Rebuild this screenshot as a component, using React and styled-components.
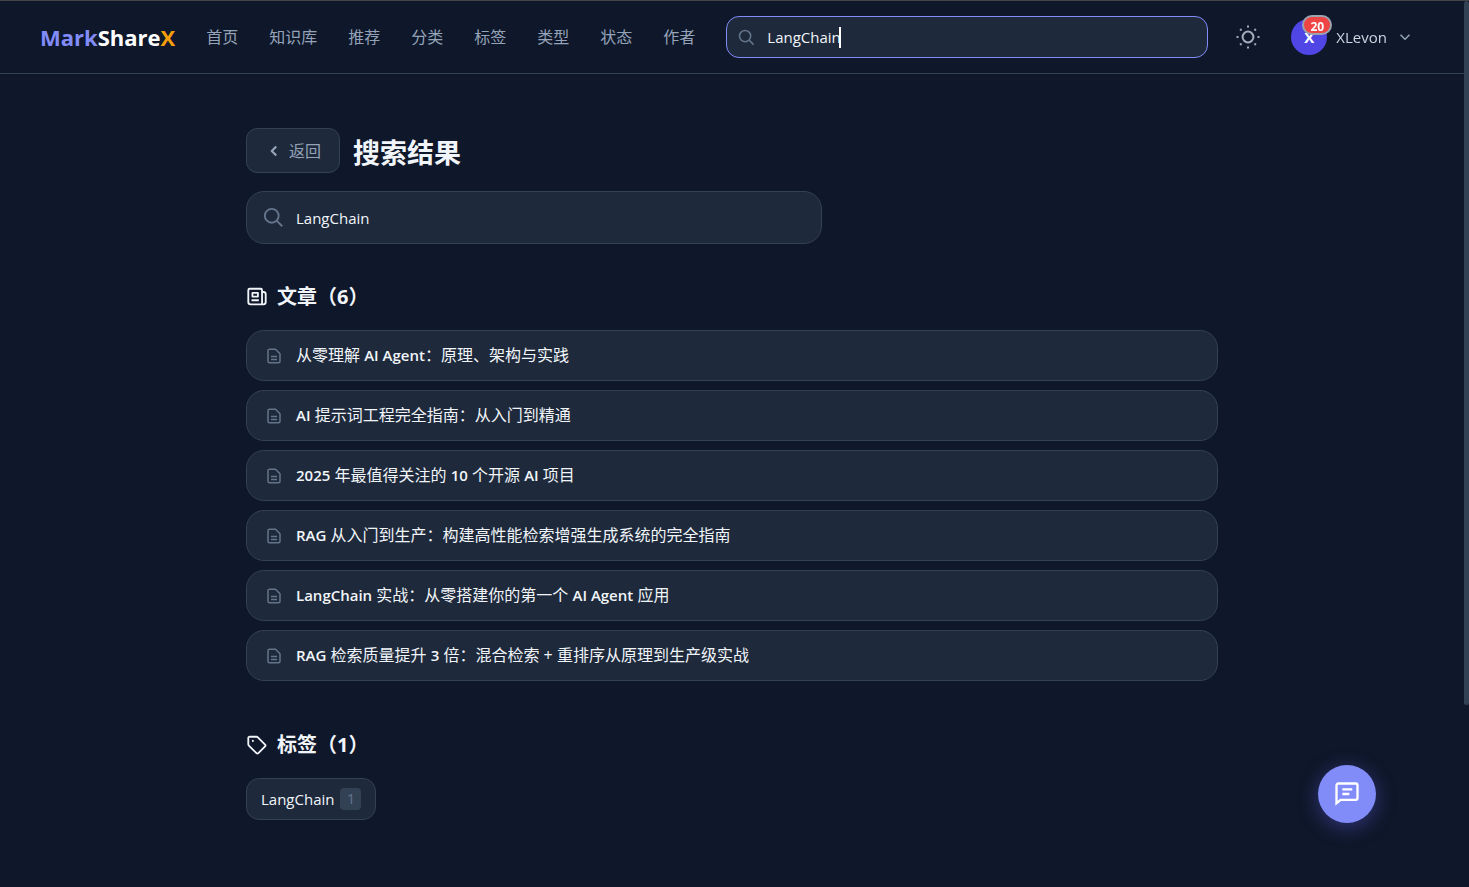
import React, { useState } from "react";
import styled, { createGlobalStyle, ThemeProvider } from "styled-components";

const theme = {
  bg: "#0f172a",
  card: "#1e293b",
  border: "#334155",
  text: "#f1f5f9",
  text_secondary: "#94a3b8",
  text_muted: "#64748b",
  primary: "#818cf8",
  accent: "#f59e0b",
  avatar: "#4f46e5",
  danger: "#ef4444",
  white: "#ffffff",
};

const navItems = ["首页", "知识库", "推荐", "分类", "标签", "类型", "状态", "作者"];

const articles = [
  "从零理解 AI Agent：原理、架构与实践",
  "AI 提示词工程完全指南：从入门到精通",
  "2025 年最值得关注的 10 个开源 AI 项目",
  "RAG 从入门到生产：构建高性能检索增强生成系统的完全指南",
  "LangChain 实战：从零搭建你的第一个 AI Agent 应用",
  "RAG 检索质量提升 3 倍：混合检索 + 重排序从原理到生产级实战",
];

const tags = [{ name: "LangChain", count: 1 }];

const GlobalStyle = createGlobalStyle`
  * {
    box-sizing: border-box;
  }
  body {
    margin: 0;
    background: ${theme.bg};
    color: ${theme.text};
    font-family: "Open Sans", "Noto Sans CJK SC", sans-serif;
    font-size: 16px;
    line-height: 24px;
  }
  button,
  input {
    font: inherit;
    color: inherit;
  }
`;

const Page = styled.div`
  min-height: 100vh;
  padding-right: 5px;
  border-top: 1px solid #45474a;
`;

const ScrollThumb = styled.div`
  position: fixed;
  top: 1px;
  right: 0;
  width: 5px;
  height: 79.4vh;
  border-radius: 3px;
  background: ${({ theme }) => theme.border};
`;

const Header = styled.header`
  display: flex;
  align-items: center;
  height: 73px;
  padding: 0 40px;
  border-bottom: 1px solid ${({ theme }) => theme.border};
`;

const Logo = styled.a`
  margin-right: 31px;
  color: ${({ theme }) => theme.white};
  font-size: 22px;
  font-weight: 700;
  line-height: 32px;
  text-decoration: none;
`;

const LogoPart = styled.span`
  color: ${({ theme, $color }) => theme[$color]};
`;

const Nav = styled.nav`
  display: flex;
  gap: 31px;
  margin-right: 31px;
`;

const NavLink = styled.a`
  color: ${({ theme }) => theme.text_secondary};
  text-decoration: none;
  white-space: nowrap;
`;

const SearchBox = styled.label`
  display: flex;
  align-items: center;
  flex: ${({ $large }) => ($large ? "none" : 1)};
  gap: 12px;
  max-width: 576px;
  height: ${({ $large }) => ($large ? 53 : 42)}px;
  padding: 0 ${({ $large }) => ($large ? 16 : 11)}px;
  border: 1px solid ${({ theme, $active }) => ($active ? theme.primary : theme.border)};
  border-radius: ${({ $large }) => ($large ? 18 : 13)}px;
  background: ${({ theme }) => theme.card};
  color: ${({ theme }) => theme.text_muted};
`;

const SearchField = styled.span`
  display: flex;
  align-items: center;
  flex: 1;
  min-width: 0;
`;

const SearchInput = styled.input`
  flex: ${({ $fit }) => ($fit ? "none" : 1)};
  field-sizing: ${({ $fit }) => ($fit ? "content" : "fixed")};
  min-width: 0;
  max-width: 100%;
  padding: 0;
  border: none;
  outline: none;
  background: transparent;
  color: ${({ theme }) => theme.text};
  caret-color: ${({ $fit }) => ($fit ? "transparent" : "auto")};
  font-size: 15px;
`;

const Caret = styled.span`
  width: 2px;
  height: 21px;
  margin-left: -2px;
  background: ${({ theme }) => theme.white};
`;

const ThemeButton = styled.button`
  display: flex;
  margin: 0 31px 0 28px;
  padding: 0;
  border: none;
  background: transparent;
  color: #a3adb9;
  cursor: pointer;
`;

const UserButton = styled.button`
  display: flex;
  align-items: center;
  gap: 9px;
  padding: 0 10px 0 0;
  border: none;
  background: transparent;
  color: #cbd5e1;
  font-size: 15px;
  cursor: pointer;

  svg {
    color: ${({ theme }) => theme.text_secondary};
  }
`;

const Avatar = styled.span`
  position: relative;
  display: flex;
  justify-content: center;
  align-items: center;
  width: 36px;
  height: 36px;
  border-radius: 50%;
  background: ${({ theme }) => theme.avatar};
  color: ${({ theme }) => theme.white};
  font-weight: 700;
`;

const Badge = styled.span`
  position: absolute;
  top: -4px;
  right: -5px;
  min-width: 30px;
  height: 20px;
  padding: 0 5px;
  border: 2px solid #9ca3af;
  border-radius: 10px;
  background: ${({ theme }) => theme.danger};
  font-size: 12px;
  line-height: 20px;
  text-align: center;
`;

const Main = styled.main`
  max-width: 972px;
  margin: 0 auto;
  padding: 54px 0 64px;
`;

const TitleRow = styled.div`
  display: flex;
  align-items: center;
  gap: 13px;
  margin-bottom: 18px;
`;

const BackButton = styled.button`
  display: flex;
  align-items: center;
  gap: 6px;
  height: 45px;
  padding: 0 18px;
  border: 1px solid ${({ theme }) => theme.border};
  border-radius: 11px;
  background: ${({ theme }) => theme.card};
  color: ${({ theme }) => theme.text_secondary};
  cursor: pointer;
`;

const Title = styled.h1`
  margin: 0;
  padding-top: 4px;
  font-size: 27px;
  font-weight: 700;
  line-height: 40px;
`;

const Section = styled.section`
  margin-top: ${({ $gap }) => $gap}px;
`;

const SectionTitle = styled.h2`
  display: flex;
  align-items: center;
  gap: 9px;
  margin: 0 0 18px;
  font-size: 20px;
  font-weight: 700;
  line-height: 30px;
`;

const ArticleList = styled.div`
  display: flex;
  flex-direction: column;
  gap: 9px;
`;

const ArticleRow = styled.a`
  display: flex;
  align-items: center;
  gap: 13px;
  padding: 13px 18px;
  border: 1px solid ${({ theme }) => theme.border};
  border-radius: 18px;
  background: ${({ theme }) => theme.card};
  color: ${({ theme }) => theme.text};
  line-height: 23px;
  text-decoration: none;

  svg {
    flex: none;
    color: ${({ theme }) => theme.text_muted};
  }
`;

const Latin = styled.span`
  font-size: 15px;
  font-weight: 600;
`;

const TagList = styled.div`
  display: flex;
  flex-wrap: wrap;
  gap: 9px;
`;

const Tag = styled.a`
  display: flex;
  align-items: center;
  gap: 6px;
  height: 42px;
  padding: 0 14px;
  border: 1px solid ${({ theme }) => theme.border};
  border-radius: 13px;
  background: ${({ theme }) => theme.card};
  color: ${({ theme }) => theme.text};
  font-size: 15px;
  text-decoration: none;
`;

const TagCount = styled.span`
  min-width: 21px;
  border-radius: 4px;
  background: ${({ theme }) => theme.border};
  color: ${({ theme }) => theme.text_muted};
  font-size: 14px;
  line-height: 22px;
  text-align: center;
`;

const ChatButton = styled.button`
  position: fixed;
  right: 93px;
  bottom: 64px;
  display: flex;
  justify-content: center;
  align-items: center;
  width: 58px;
  height: 58px;
  padding: 0;
  border: none;
  border-radius: 50%;
  background: ${({ theme }) => theme.primary};
  color: ${({ theme }) => theme.white};
  box-shadow: 0 4px 20px rgba(99, 102, 241, 0.4);
  cursor: pointer;
`;

const Icon = ({ size = 24, width = 2, children }) => (
  <svg
    width={size}
    height={size}
    viewBox="0 0 24 24"
    fill="none"
    stroke="currentColor"
    strokeWidth={width}
    strokeLinejoin="round"
    aria-hidden="true"
  >
    {children}
  </svg>
);

const SearchIcon = ({ size }) => (
  <Icon size={size} width={2.2}>
    <circle cx="10" cy="10" r="7.9" />
    <path d="M15.5 15.5L22 22" />
  </Icon>
);

const SunIcon = () => (
  <Icon>
    <circle cx="12" cy="12" r="5.4" />
    <path d="M11 1.5h2M11 22.5h2M.5 12h2M21.5 12h2M3.8 4.8h2M18.2 4.8h2M3.8 19.2h2M18.2 19.2h2" />
  </Icon>
);

const NewsIcon = () => (
  <Icon size={22}>
    <path d="M17.5 20H5a2.5 2.5 0 0 1-2.5-2.5V4.5A1.5 1.5 0 0 1 4 3h12a1.5 1.5 0 0 1 1.5 1.5V20zM17.5 6.5H19a2.5 2.5 0 0 1 2.5 2.5v8.5A2.5 2.5 0 0 1 19 20h-1.5" />
    <path d="M6 15.5h8M7 7.5h6v4H7z" />
  </Icon>
);

const FileIcon = () => (
  <Icon size={18}>
    <path d="M14 3H6a2 2 0 0 0-2 2v14a2 2 0 0 0 2 2h12a2 2 0 0 0 2-2V9l-6-6zM8 12.5h8M8 16.5h8" />
  </Icon>
);

const TagIcon = () => (
  <Icon size={22}>
    <path d="M4.500 3h7a2 2 0 0 1 1.400.6l7.900 7.900a1.500 1.500 0 0 1 0 2.100l-7.300 7.300a1.500 1.500 0 0 1-2.100 0l-8.300-8.300a2 2 0 0 1-.6-1.400V4.500A1.500 1.500 0 0 1 4.500 3z" />
    <circle cx="7.500" cy="7.500" r="1.100" fill="currentColor" stroke="none" />
  </Icon>
);

const ChatIcon = () => (
  <Icon size={28}>
    <path
      strokeLinejoin="miter"
      d="M3 20V4.500A1.500 1.500 0 0 1 4.500 3h15A1.500 1.500 0 0 1 21 4.500v11a1.500 1.500 0 0 1-1.500 1.500H6.500z"
    />
    <path d="M8 8h8.500M8 12h6" />
  </Icon>
);

const titleParts = (title) => title.split(/([A-Za-z0-9]+(?: [A-Za-z]+)*)/);

const App = () => {
  const [keyword, setKeyword] = useState("LangChain");
  const onChange = (e) => setKeyword(e.target.value);

  return (
    <ThemeProvider theme={theme}>
      <GlobalStyle />
      <Page>
        <Header>
          <Logo href="#">
            <LogoPart $color="primary">Mark</LogoPart>Share<LogoPart $color="accent">X</LogoPart>
          </Logo>
          <Nav>
            {navItems.map((item) => (
              <NavLink key={item} href="#">
                {item}
              </NavLink>
            ))}
          </Nav>
          <SearchBox $active>
            <SearchIcon size={17} />
            <SearchField>
              <SearchInput $fit aria-label="搜索" value={keyword} onChange={onChange} autoFocus />
              <Caret />
            </SearchField>
          </SearchBox>
          <ThemeButton aria-label="切换主题">
            <SunIcon />
          </ThemeButton>
          <UserButton>
            <Avatar>
              X<Badge>20</Badge>
            </Avatar>
            XLevon
            <Icon size={18}>
              <path d="M6 9l6 6 6-6" />
            </Icon>
          </UserButton>
        </Header>
        <Main>
          <TitleRow>
            <BackButton>
              <Icon size={18} width={3}>
                <path d="M15 6l-6 6 6 6" />
              </Icon>
              返回
            </BackButton>
            <Title>搜索结果</Title>
          </TitleRow>
          <SearchBox $large>
            <SearchIcon size={21} />
            <SearchInput aria-label="搜索内容" value={keyword} onChange={onChange} />
          </SearchBox>
          <Section $gap={38}>
            <SectionTitle>
              <NewsIcon />
              文章（6）
            </SectionTitle>
            <ArticleList>
              {articles.map((title) => (
                <ArticleRow key={title} href="#">
                  <FileIcon />
                  <span>
                    {titleParts(title).map((part, i) => (i % 2 ? <Latin key={i}>{part}</Latin> : part))}
                  </span>
                </ArticleRow>
              ))}
            </ArticleList>
          </Section>
          <Section $gap={49}>
            <SectionTitle>
              <TagIcon />
              标签（1）
            </SectionTitle>
            <TagList>
              {tags.map((tag) => (
                <Tag key={tag.name} href="#">
                  {tag.name}
                  <TagCount>{tag.count}</TagCount>
                </Tag>
              ))}
            </TagList>
          </Section>
        </Main>
        <ChatButton aria-label="留言">
          <ChatIcon />
        </ChatButton>
        <ScrollThumb />
      </Page>
    </ThemeProvider>
  );
};

export default App;
